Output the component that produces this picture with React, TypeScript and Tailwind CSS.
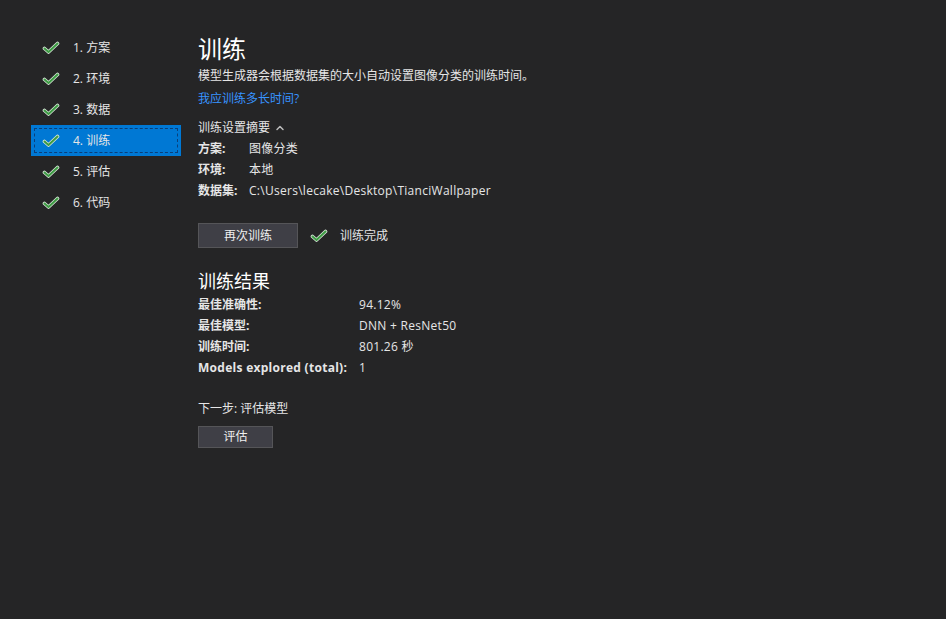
import { ChevronUp } from "lucide-react"

const font = { fontFamily: '"Open Sans", "Noto Sans CJK SC", sans-serif' }

const steps = ["1. 方案", "2. 环境", "3. 数据", "4. 训练", "5. 评估", "6. 代码"]

function Check() {
  return (
    <svg width="18" height="14" viewBox="0 0 18 14" className="shrink-0">
      <path d="M2.5 7.5 L6.5 11 L15.5 2.5" fill="none" stroke="#d8e6d8" strokeWidth="3.6" strokeLinecap="round" strokeLinejoin="round" />
      <path d="M2.5 7.5 L6.5 11 L15.5 2.5" fill="none" stroke="#3d9b43" strokeWidth="2" strokeLinecap="round" strokeLinejoin="round" />
    </svg>
  )
}

function Row({ label, value, w, latin }: { label: string; value: string; w: string; latin?: boolean }) {
  return (
    <div className="flex h-[21px] items-center">
      <span className={`${w} font-bold ${latin ? "tracking-[0.28px]" : ""}`}>{label}</span>
      <span className="tracking-[0.28px]">{value}</span>
    </div>
  )
}

export default function App() {
  return (
    <div className="flex h-[619px] w-[946px] bg-[#252526] text-[12px] text-[#e6e6e6]" style={font}>
      <div className="w-[167px] shrink-0 pl-[31px] pt-[32px]">
        {steps.map((s, i) => (
          <div
            key={s}
            className={`flex h-[31px] w-[150px] items-center gap-[13px] pl-[11px] ${
              i === 3 ? "bg-[#0078d4] outline-1 outline-dashed outline-[#0a3f7a] -outline-offset-[4px]" : ""
            }`}
          >
            <Check />
            <span>{s}</span>
          </div>
        ))}
      </div>

      <div className="pt-[33px] pl-[31px]">
        <h1 className="text-[24px] leading-[32px] text-white">训练</h1>
        <p className="mt-[2px] leading-[18px]">模型生成器会根据数据集的大小自动设置图像分类的训练时间。</p>
        <a className="mt-[5px] block leading-[18px] text-[#3794ff]">我应训练多长时间?</a>

        <div className="mt-[11px] flex h-[18px] items-center gap-[4px]">
          <span>训练设置摘要</span>
          <ChevronUp size={12} strokeWidth={3} className="text-[#bbbbbb]" />
        </div>
        <div className="mt-[1px]">
          <Row label="方案:" value="图像分类" w="w-[51px]" />
          <Row label="环境:" value="本地" w="w-[51px]" />
          <Row label="数据集:" value="C:\Users\lecake\Desktop\TianciWallpaper" w="w-[51px]" />
        </div>

        <div className="mt-[22px] flex items-center">
          <button className="h-[25px] w-[100px] border border-[#555558] bg-[#3f3f46] text-[#f0f0f0]">再次训练</button>
          <span className="ml-[12px]"><Check /></span>
          <span className="ml-[12px]">训练完成</span>
        </div>

        <h2 className="mt-[21px] text-[18px] leading-[24px] text-white">训练结果</h2>
        <div className="mt-[1px]">
          <Row label="最佳准确性:" value="94.12%" w="w-[161px]" />
          <Row label="最佳模型:" value="DNN + ResNet50" w="w-[161px]" />
          <Row label="训练时间:" value="801.26 秒" w="w-[161px]" />
          <Row label="Models explored (total):" value="1" w="w-[161px]" latin />
        </div>

        <p className="mt-[22px] leading-[18px]">下一步: 评估模型</p>
        <button className="mt-[8px] h-[22px] w-[75px] border border-[#555558] bg-[#3f3f46] text-[#f0f0f0]">评估</button>
      </div>
    </div>
  )
}
